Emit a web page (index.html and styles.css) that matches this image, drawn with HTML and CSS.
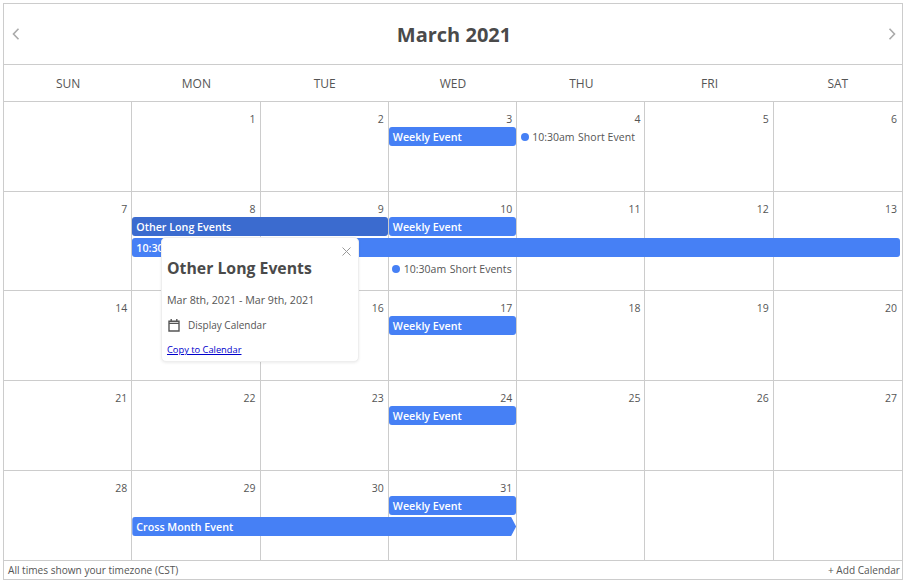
FILE: index.html
```html
<!DOCTYPE html>
<html lang="en">
<head>
<meta charset="utf-8">
<title>March 2021</title>
<link rel="stylesheet" href="styles.css">
</head>
<body>
<main class="calendar">
  <header class="toolbar">
    <button class="nav" aria-label="Previous"><svg width="8" height="12" viewBox="0 0 8 12"><path d="M6.5 .8 1.5 6l5 5.2" /></svg></button>
    <h1 class="title">March 2021</h1>
    <button class="nav" aria-label="Next"><svg width="8" height="12" viewBox="0 0 8 12"><path d="M1.5 .8 6.5 6l-5 5.2" /></svg></button>
  </header>
  <div class="weekdays">
    <div>SUN</div><div>MON</div><div>TUE</div><div>WED</div><div>THU</div><div>FRI</div><div>SAT</div>
  </div>
  <div class="weeks">
    <section class="week">
      <div class="cell c1"></div>
      <div class="cell c2"></div>
      <div class="cell c3"></div>
      <div class="cell c4"></div>
      <div class="cell c5"></div>
      <div class="cell c6"></div>
      <div class="cell c7"></div>
      <div class="num c2">1</div><div class="num c3">2</div><div class="num c4">3</div><div class="num c5">4</div><div class="num c6">5</div><div class="num c7">6</div>
      <div class="event c4 r1">Weekly Event</div>
      <div class="dot-event c5 r1"><span class="dot"></span><span>10:30am</span><span class="ev-title">Short Event</span></div>
    </section>
    <section class="week tall">
      <div class="cell c1"></div>
      <div class="cell c2"></div>
      <div class="cell c3"></div>
      <div class="cell c4"></div>
      <div class="cell c5"></div>
      <div class="cell c6"></div>
      <div class="cell c7"></div>
      <div class="num c1">7</div><div class="num c2">8</div><div class="num c3">9</div><div class="num c4">10</div><div class="num c5">11</div><div class="num c6">12</div><div class="num c7">13</div>
      <div class="event dark span-2-3 r1">Other Long Events</div>
      <div class="event c4 r1">Weekly Event</div>
      <div class="event span-2-7 r2">10:30am</div>
      <div class="dot-event c4 r3"><span class="dot"></span><span>10:30am</span><span class="ev-title">Short Events</span></div>
    </section>
    <section class="week">
      <div class="cell c1"></div>
      <div class="cell c2"></div>
      <div class="cell c3"></div>
      <div class="cell c4"></div>
      <div class="cell c5"></div>
      <div class="cell c6"></div>
      <div class="cell c7"></div>
      <div class="num c1">14</div><div class="num c3">16</div><div class="num c4">17</div><div class="num c5">18</div><div class="num c6">19</div><div class="num c7">20</div>
      <div class="event c4 r1">Weekly Event</div>
    </section>
    <section class="week">
      <div class="cell c1"></div>
      <div class="cell c2"></div>
      <div class="cell c3"></div>
      <div class="cell c4"></div>
      <div class="cell c5"></div>
      <div class="cell c6"></div>
      <div class="cell c7"></div>
      <div class="num c1">21</div><div class="num c2">22</div><div class="num c3">23</div><div class="num c4">24</div><div class="num c5">25</div><div class="num c6">26</div><div class="num c7">27</div>
      <div class="event c4 r1">Weekly Event</div>
    </section>
    <section class="week">
      <div class="cell c1"></div>
      <div class="cell c2"></div>
      <div class="cell c3"></div>
      <div class="cell c4"></div>
      <div class="cell c5"></div>
      <div class="cell c6"></div>
      <div class="cell c7"></div>
      <div class="num c1">28</div><div class="num c2">29</div><div class="num c3">30</div><div class="num c4">31</div>
      <div class="event c4 r1">Weekly Event</div>
      <div class="event arrow span-2-4 r2">Cross Month Event</div>
    </section>
  </div>
  <footer class="footer">
    <span>All times shown your timezone (CST)</span>
    <span>+ Add Calendar</span>
  </footer>
  <aside class="popover">
    <button class="close" aria-label="Close"><svg width="9" height="9" viewBox="0 0 9 9"><path d="M.5 .5l8 8M8.5 .5l-8 8" /></svg></button>
    <h2 class="pop-title">Other Long Events</h2>
    <p class="pop-date">Mar 8th, 2021 - Mar 9th, 2021</p>
    <div class="pop-row">
      <svg class="cal-icon" width="12" height="14" viewBox="0 0 12 14"><path d="M1 3.2h10v9.8H1zM1 5.4h10M3.2 1v2M8.8 1v2" /></svg>
      <span>Display Calendar</span>
    </div>
    <a class="pop-link" href="#">Copy to Calendar</a>
  </aside>
</main>
</body>
</html>
```

FILE: styles.css
```css
* { box-sizing: border-box; }

html, body { margin: 0; background: #fff; }

body {
  padding: 3px 1px 0 3px;
  font-family: "Open Sans", "Noto Sans", sans-serif;
  font-size: 10.5px;
  color: #555;
}

.calendar {
  position: relative;
  width: 900px;
  border: 1px solid #ccc;
}

.toolbar {
  display: flex;
  align-items: center;
  justify-content: space-between;
  height: 61px;
  padding: 0 6px 0 8px;
  border-bottom: 1px solid #ccc;
}

.title {
  margin: 0;
  font-size: 20px;
  font-weight: 700;
  color: #4a4a4a;
}

.nav {
  display: flex;
  padding: 0;
  border: 0;
  background: none;
}

.nav svg path {
  fill: none;
  stroke: #aaa;
  stroke-width: 1.6;
}

.weekdays {
  display: grid;
  grid-template-columns: repeat(7, 1fr);
  height: 37px;
  border-bottom: 1px solid #ccc;
  font-size: 12px;
  line-height: 38px;
  text-align: center;
}

.week {
  display: grid;
  grid-template-columns: repeat(7, 1fr);
  grid-template-rows: 25px 21px 21px 21px 1fr;
  height: 90px;
  border-bottom: 1px solid #ccc;
}

.week.tall { height: 99px; }

.cell {
  grid-row: 1 / -1;
  border-right: 1px solid #ccc;
}

.cell.c7 { border-right: 0; }

.c1 { grid-column: 1; }
.c2 { grid-column: 2; }
.c3 { grid-column: 3; }
.c4 { grid-column: 4; }
.c5 { grid-column: 5; }
.c6 { grid-column: 6; }
.c7 { grid-column: 7; }

.span-2-3 { grid-column: 2 / 4; }
.span-2-4 { grid-column: 2 / 5; }
.span-2-7 { grid-column: 2 / 8; }

.r1 { grid-row: 2; }
.r2 { grid-row: 3; }
.r3 { grid-row: 4; }

.num {
  grid-row: 1;
  padding: 10px 5px 0 0;
  line-height: 14px;
  text-align: right;
}

.event {
  height: 19px;
  margin-right: 1px;
  padding-left: 4px;
  border-radius: 3px;
  background: #4680f5;
  color: #fff;
  font-size: 10.7px;
  font-weight: 600;
  line-height: 21px;
  white-space: nowrap;
  overflow: hidden;
}

.event.dark { background: #3b6bcf; }

.event.span-2-7 { margin-right: 2px; }

.event.arrow {
  border-radius: 3px 0 0 3px;
  clip-path: polygon(0 0, calc(100% - 5px) 0, 100% 50%, calc(100% - 5px) 100%, 0 100%);
}

.dot-event {
  display: flex;
  align-items: center;
  height: 19px;
  padding-left: 3.5px;
  white-space: nowrap;
}

.dot {
  width: 8px;
  height: 8px;
  margin-right: 3.5px;
  border-radius: 50%;
  background: #4680f5;
}

.ev-title {
  margin-left: 3.5px;
  font-weight: 500;
  letter-spacing: .05px;
}

.footer {
  display: flex;
  justify-content: space-between;
  height: 18px;
  padding: 0 2px 0 4px;
  font-size: 10.1px;
  line-height: 18px;
}

.popover {
  position: absolute;
  left: 157px;
  top: 233px;
  width: 198px;
  height: 125px;
  padding: 18px 5px 0;
  border: 1px solid #eee;
  border-radius: 5px;
  background: #fff;
  box-shadow: 0 1px 3px rgba(0, 0, 0, .08);
}

.close {
  position: absolute;
  top: 9px;
  right: 7px;
  display: flex;
  padding: 0;
  border: 0;
  background: none;
}

.close path {
  fill: none;
  stroke: #999;
  stroke-width: 1;
}

.pop-title {
  margin: 0 0 13px;
  font-size: 15.8px;
  font-weight: 700;
  line-height: 24px;
  color: #4a4a4a;
}

.pop-date {
  margin: 0 0 10px;
  font-size: 10.7px;
  line-height: 14px;
}

.pop-row {
  display: flex;
  align-items: center;
  gap: 8px;
  height: 16px;
  margin-bottom: 10px;
  padding-left: 1px;
  font-size: 10px;
}

.cal-icon path {
  fill: none;
  stroke: #555;
  stroke-width: 1.4;
}

.pop-link {
  display: block;
  font-size: 9.3px;
  line-height: 13px;
  color: #0000cc;
}
```
